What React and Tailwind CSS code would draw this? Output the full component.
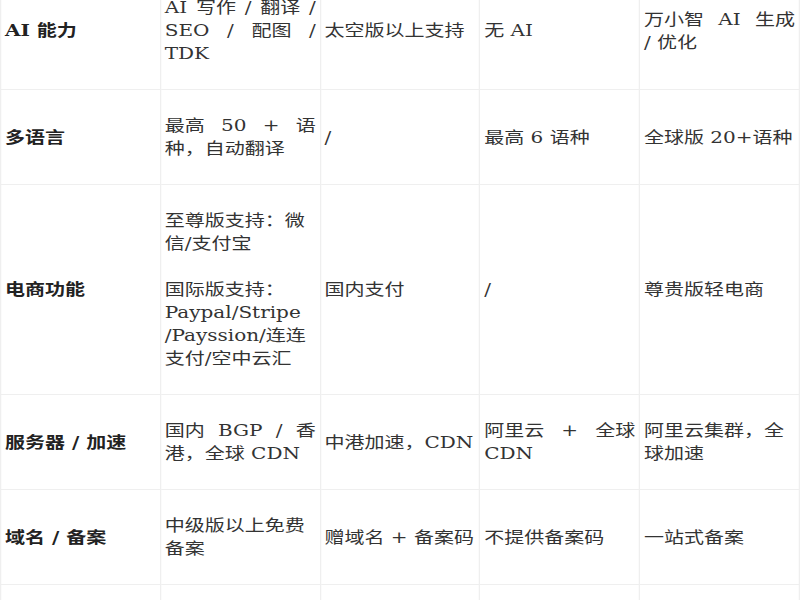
import React from "react";

// keeps a chinese word from being spread out when its line is justified
const W = ({ children }) => <span className="inline-block">{children}</span>;

// comparison rows, the first one is partly scrolled out above the window
const rows = [
  {
    label: "AI 能力",
    cells: [
      <p className="text-justify">
        AI <W>写作</W> / <W>翻译</W> / SEO / <W>配图</W> / TDK
      </p>,
      "太空版以上支持",
      "无 AI",
      <p className="text-justify">
        <W>万小智</W> AI <W>生成</W> /{"\u00a0"}优化
      </p>,
    ],
  },
  {
    label: "多语言",
    cells: [
      <p className="text-justify">
        <W>最高</W> 50 + 语种，自动翻译
      </p>,
      "/",
      "最高 6 语种",
      "全球版 20+语种",
    ],
  },
  {
    label: "电商功能",
    cells: [
      <>
        <p>至尊版支持：微信/支付宝</p>
        <p className="mt-[23px]">
          国际版支持：Paypal/Stripe
          <br />
          /Payssion/连连支付/空中云汇
        </p>
      </>,
      "国内支付",
      "/",
      "尊贵版轻电商",
    ],
  },
  {
    label: "服务器 / 加速",
    cells: [
      <p className="text-justify">
        <W>国内</W> BGP / 香港，全球 CDN
      </p>,
      "中港加速，CDN",
      <p className="text-justify">
        <W>阿里云</W> + <W>全球</W> CDN
      </p>,
      "阿里云集群，全球加速",
    ],
  },
  {
    label: "域名 / 备案",
    cells: ["中级版以上免费备案", "赠域名 + 备案码", "不提供备案码", "一站式备案"],
  },
];

const cellCls =
  "border border-[#efefef] px-[3px] py-6 align-middle text-left leading-[23px] text-[16px]";

export default function App() {
  return (
    <div className="w-full h-[600px] overflow-hidden bg-white">
      {/* the shot is stretched sideways, so the 640px table is widened to 800 */}
      <div
        className="w-[640px] -mt-[29px] origin-top-left scale-x-125 text-[#333]"
        style={{ fontFamily: '"DejaVu Serif", "Noto Sans CJK SC", serif' }}
      >
        <table className="w-full table-fixed border-collapse">
          <tbody>
            {rows.map((row, i) => (
              <tr key={i}>
                <td className={`${cellCls} font-bold text-[#222]`}>{row.label}</td>
                {row.cells.map((c, j) => (
                  <td key={j} className={cellCls}>
                    {c}
                  </td>
                ))}
              </tr>
            ))}
            {/* next row starts at the bottom edge, nothing of it is readable */}
            <tr className="h-[95px]">
              {[0, 1, 2, 3, 4].map((k) => (
                <td key={k} className="border border-[#efefef]" />
              ))}
            </tr>
          </tbody>
        </table>
      </div>
    </div>
  );
}
